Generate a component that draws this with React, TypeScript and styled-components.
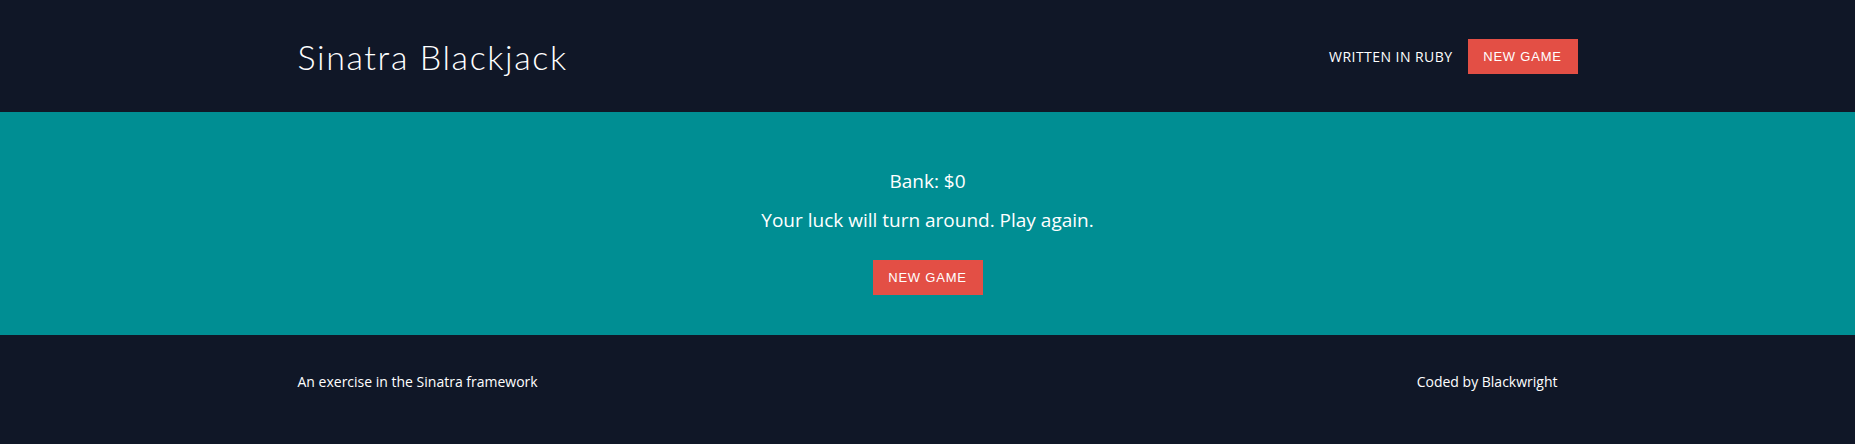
import React from "react";
import styled, { createGlobalStyle } from "styled-components";

const GlobalStyle = createGlobalStyle`
  html, body { margin: 0; padding: 0; }
  body {
    background: #101727;
    font-family: "Open Sans", "Liberation Sans", sans-serif;
    color: #ffffff;
    -webkit-font-smoothing: antialiased;
  }
`;

const Container = styled.div`
  width: 1260px;
  margin: 0 auto;
  display: flex;
  align-items: center;
  justify-content: space-between;
`;

const Header = styled.header`
  background: #101727;
  height: 112px;
  display: flex;
  align-items: center;
`;

const Title = styled.h1`
  margin: 0;
  font-family: Lato, "Open Sans", sans-serif;
  font-weight: 300;
  font-size: 34px;
  letter-spacing: 1.6px;
  color: #ffffff;
`;

const Nav = styled.nav`
  display: flex;
  align-items: center;
  gap: 15px;
  margin-right: -20px;
`;

const NavLink = styled.span`
  font-family: "Open Sans", sans-serif;
  font-size: 14px;
  letter-spacing: 0.45px;
  text-transform: uppercase;
  color: #ffffff;
`;

const Button = styled.button`
  background: #e34f45;
  border: none;
  color: #ffffff;
  font-family: "Liberation Sans", Arial, sans-serif;
  font-size: 13px;
  letter-spacing: 0.8px;
  text-transform: uppercase;
  height: 35px;
  width: 110px;
  padding: 0;
  cursor: pointer;
`;

const Main = styled.main`
  background: #008e93;
  padding: 56px 0 40px;
  display: flex;
  flex-direction: column;
  align-items: center;
`;

const Line = styled.p<{ $gap?: number }>`
  margin: ${(p) => p.$gap ?? 0}px 0 0;
  font-size: 19px;
  line-height: 27px;
  color: #ffffff;
`;

const CenterButton = styled(Button)`
  margin-top: 26px;
`;

const Footer = styled.footer`
  background: #101727;
  height: 109px;
  box-sizing: border-box;
  padding-top: 37px;
`;

const FooterText = styled.span`
  font-size: 14px;
  line-height: 20px;
  color: #ffffff;
`;

export default function App() {
  return (
    <>
      <GlobalStyle />
      <Header>
        <Container>
          <Title>Sinatra Blackjack</Title>
          <Nav>
            <NavLink>Written in Ruby</NavLink>
            <Button>New Game</Button>
          </Nav>
        </Container>
      </Header>
      <Main>
        <Line>Bank: $0</Line>
        <Line $gap={12}>Your luck will turn around. Play again.</Line>
        <CenterButton>New Game</CenterButton>
      </Main>
      <Footer>
        <Container>
          <FooterText>An exercise in the Sinatra framework</FooterText>
          <FooterText>Coded by Blackwright</FooterText>
        </Container>
      </Footer>
    </>
  );
}
